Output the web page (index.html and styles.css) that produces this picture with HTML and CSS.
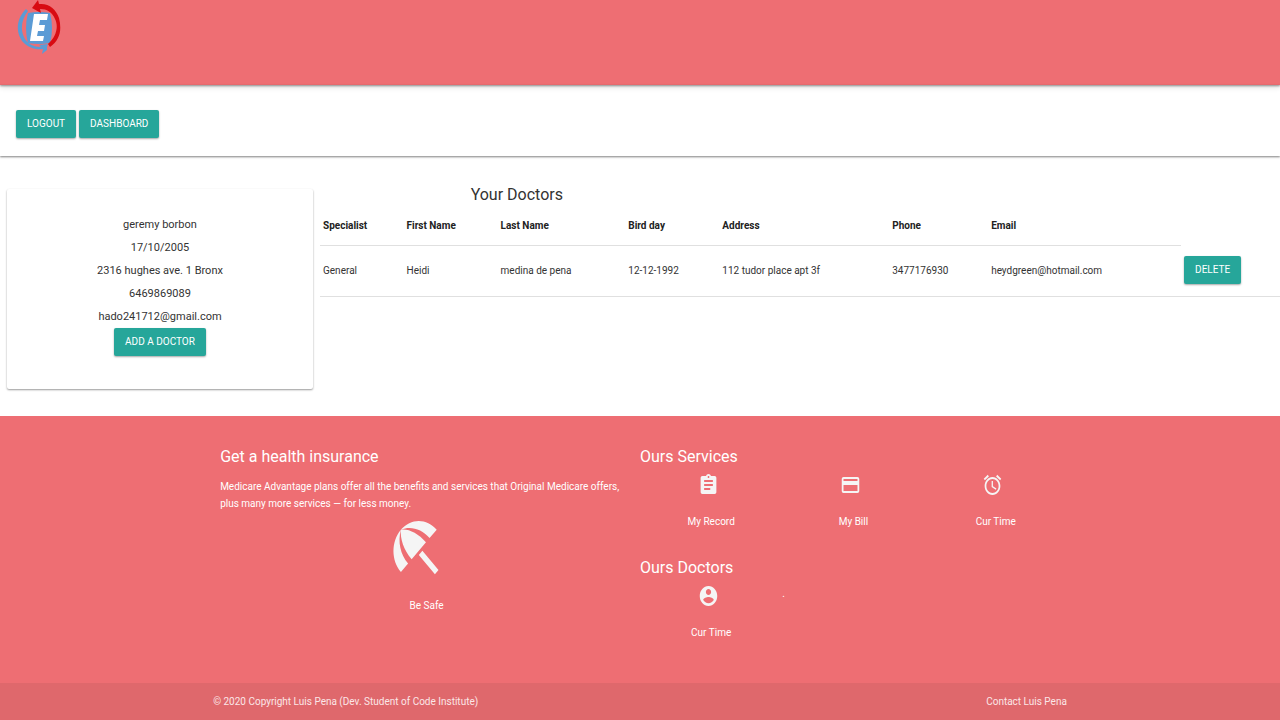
FILE: index.html
```html
<!DOCTYPE html>
<html lang="en">
<head>
<meta charset="utf-8">
<meta name="viewport" content="width=device-width, initial-scale=1">
<title>Your Doctors</title>
<link rel="stylesheet" href="styles.css">
</head>
<body>
<header class="brand-bar">
  <a class="logo" href="#" aria-label="Home">
    <svg viewBox="0 0 44 54" aria-hidden="true">
      <path d="M11 13Q22 11 33 13 37 28 33 43 22 45 11 43 7 28 11 13Z" fill="#5b9bd5"/>
      <path d="M9 9C0 18-2 31 5 41c6 7 14 9 21 8l-1 5 5-4c0-3 0-4 1-6l-9 1 2 2C17 47 11 44 8 39 3 31 4 20 11 11Z" fill="#5b9bd5"/>
      <path d="M15 8 21 0l1 4c10-1 17 5 20 14 3 12 1 22-9 29l-2-3c8-7 11-17 7-25-3-7-8-10-15-10l1 4Z" fill="#d80b12"/>
      <path d="M17 14h14l-1 6h-7l-1 5h6l-1 6h-6l-1 5h7l-1 5H13Z" fill="#fff"/>
    </svg>
  </a>
</header>
<nav class="actions">
  <button class="btn" type="button">LOGOUT</button>
  <button class="btn" type="button">DASHBOARD</button>
</nav>
<main class="dashboard">
  <section class="profile">
    <p>geremy borbon</p>
    <p>17/10/2005</p>
    <p>2316 hughes ave. 1 Bronx</p>
    <p>6469869089</p>
    <p>hado241712@gmail.com</p>
    <button class="btn" type="button">ADD A DOCTOR</button>
  </section>
  <section class="doctors">
    <h1>Your Doctors</h1>
    <table>
      <colgroup>
        <col class="c-specialist"><col class="c-first"><col class="c-last"><col class="c-birth"><col class="c-address"><col class="c-phone"><col class="c-email"><col>
      </colgroup>
      <thead>
        <tr><th>Specialist</th><th>First Name</th><th>Last Name</th><th>Bird day</th><th>Address</th><th>Phone</th><th>Email</th></tr>
      </thead>
      <tbody>
        <tr><td>General</td><td>Heidi</td><td>medina de pena</td><td>12-12-1992</td><td>112 tudor place apt 3f</td><td>3477176930</td><td>heydgreen@hotmail.com</td><td><button class="btn" type="button">DELETE</button></td></tr>
      </tbody>
    </table>
  </section>
</main>
<footer class="footer">
  <div class="container footer-grid">
    <section class="insurance">
      <h2>Get a health insurance</h2>
      <p>Medicare Advantage plans offer all the benefits and services that Original Medicare offers, plus many more services — for less money.</p>
      <a class="tile tile-large" href="#">
        <svg viewBox="0 0 24 24" preserveAspectRatio="none" aria-hidden="true"><path d="M13.127 14.56l1.43-1.43 6.44 6.443L19.57 21zm4.293-5.73l2.86-2.86c-3.95-3.95-10.35-3.96-14.3-.02 3.93-1.3 8.31-.25 11.44 2.88zM5.95 5.98c-3.94 3.95-3.93 10.35.02 14.3l2.86-2.86C5.7 14.29 4.65 9.91 5.95 5.98zm.02-.02l-.01.01c-.38 3.01 1.17 6.88 4.3 10.02l5.73-5.73c-3.13-3.13-7.01-4.68-10.02-4.3z"/></svg>
        <span>Be Safe</span>
      </a>
    </section>
    <div class="links">
      <section>
        <h2>Ours Services</h2>
        <div class="tiles">
          <a class="tile" href="#">
            <svg viewBox="0 0 24 24" preserveAspectRatio="none" aria-hidden="true"><path d="M19 3h-4.180C14.400 1.840 13.300 1 12 1c-1.300 0-2.400.840-2.820 2H5c-1.100 0-2 .9-2 2v14c0 1.100.9 2 2 2h14c1.100 0 2-.9 2-2V5c0-1.100-.9-2-2-2zm-7 0c.55 0 1 .45 1 1s-.45 1-1 1-1-.45-1-1 .45-1 1-1zm2 14H7v-2h7v2zm3-4H7v-2h10v2zm0-4H7V7h10v2z"/></svg>
            <span>My Record</span>
          </a>
          <a class="tile" href="#">
            <svg viewBox="0 0 24 24" preserveAspectRatio="none" aria-hidden="true"><path d="M20 4H4c-1.110 0-1.990.890-1.990 2L2 18c0 1.110.890 2 2 2h16c1.110 0 2-.890 2-2V6c0-1.110-.890-2-2-2zm0 14H4v-6h16v6zm0-10H4V6h16v2z"/></svg>
            <span>My Bill</span>
          </a>
          <a class="tile" href="#">
            <svg viewBox="0 0 24 24" preserveAspectRatio="none" aria-hidden="true"><path d="M22 5.720l-4.600-3.860-1.290 1.530 4.600 3.860L22 5.720zM7.880 3.390L6.600 1.860 2 5.710l1.290 1.530 4.590-3.850zM12.500 8H11v6l4.750 2.850.75-1.230-4-2.370V8zM12 4c-4.970 0-9 4.030-9 9s4.020 9 9 9c4.970 0 9-4.030 9-9s-4.030-9-9-9zm0 16c-3.870 0-7-3.130-7-7s3.130-7 7-7 7 3.130 7 7-3.130 7-7 7z"/></svg>
            <span>Cur Time</span>
          </a>
        </div>
      </section>
      <section>
        <h2>Ours Doctors</h2>
        <div class="tiles">
          <a class="tile" href="#">
            <svg viewBox="0 0 24 24" preserveAspectRatio="none" aria-hidden="true"><path d="M12 2C6.480 2 2 6.480 2 12s4.480 10 10 10 10-4.480 10-10S17.520 2 12 2zm0 3c1.660 0 3 1.340 3 3s-1.340 3-3 3-3-1.340-3-3 1.340-3 3-3zm0 14.200c-2.500 0-4.710-1.280-6-3.220.03-1.990 4-3.080 6-3.080 1.990 0 5.970 1.090 6 3.080-1.290 1.940-3.500 3.220-6 3.220z"/></svg>
            <span>Cur Time</span>
          </a>
          <span class="dot">.</span>
        </div>
      </section>
    </div>
  </div>
  <div class="copyright">
    <div class="container copyright-row">
      <span>© 2020 Copyright Luis Pena (Dev. Student of Code Institute)</span>
      <a href="#">Contact Luis Pena</a>
    </div>
  </div>
</footer>
</body>
</html>
```
FILE: styles.css
```css
* { box-sizing: border-box; }
body {
  margin: 0;
  min-height: 100vh;
  display: flex;
  flex-direction: column;
  background: #fff;
  color: #333;
  font: 10px/17px Roboto, "Open Sans", sans-serif;
}
h1, h2, p { margin: 0; font-weight: 400; }
a { color: inherit; text-decoration: none; }

.brand-bar {
  height: 85px;
  padding-left: 17px;
  background: #ee6e73;
  box-shadow: 0 1px 2px rgba(0, 0, 0, .4), 0 3px 5px rgba(0, 0, 0, .1);
}
.logo { display: block; width: 44px; }
.logo svg { display: block; width: 44px; height: 54px; }

.actions {
  display: flex;
  gap: 3px;
  padding: 25px 16px 18px;
  box-shadow: 0 1px 2px rgba(0, 0, 0, .5);
}
.btn {
  height: 28px;
  padding: 0 11px;
  border: 0;
  border-radius: 2px;
  background: #26a69a;
  color: #fff;
  font: inherit;
  font-size: 10px;
  line-height: 28px;
  white-space: nowrap;
  box-shadow: 0 1px 2px rgba(0, 0, 0, .35);
  cursor: pointer;
}

.dashboard {
  display: grid;
  grid-template-columns: 1fr 3fr;
  align-items: start;
  padding: 33px 0 27px;
}
.profile {
  margin: 0 7px;
  padding: 24px 16px 33px;
  border-radius: 2px;
  text-align: center;
  font-size: 11px;
  line-height: 23px;
  box-shadow: 0 1px 2px rgba(0, 0, 0, .4);
}
.profile .btn { display: block; margin: 0 auto; }

.doctors h1 {
  width: 41%;
  margin-top: -6px;
  text-align: center;
  font-size: 16px;
  line-height: 24px;
}
table {
  width: 100%;
  table-layout: fixed;
  border-collapse: collapse;
}
.c-specialist { width: 8.7%; }
.c-first { width: 9.8%; }
.c-last { width: 13.3%; }
.c-birth { width: 9.8%; }
.c-address { width: 17.7%; }
.c-phone { width: 10.3%; }
.c-email { width: 20.1%; }
th, td {
  padding: 0 3px;
  text-align: left;
  white-space: nowrap;
  border-bottom: 1px solid #e0e0e0;
}
th { height: 38px; font-weight: 700; color: #222; }
td { height: 51px; }

.footer {
  flex: 1;
  display: flex;
  flex-direction: column;
  background: #ee6e73;
  color: #fff;
}
.container { width: 66.7%; margin: 0 auto; }
.footer-grid {
  flex: 1;
  display: grid;
  grid-template-columns: 1fr 1fr;
  padding-top: 29px;
}
.footer h2 { font-size: 16px; line-height: 24px; }
.insurance { padding: 0 7px; }
.insurance p { margin-top: 9px; }
.links { display: grid; align-content: start; gap: 26px; }
.tiles { display: grid; grid-template-columns: repeat(3, 1fr); }
.tile {
  display: flex;
  flex-direction: column;
  align-items: center;
  gap: 16px;
}
.tile svg {
  width: 21px;
  height: 24px;
  margin: 4px 6px 0 0;
  fill: #f5f5f5;
}
.tile-large { gap: 14px; }
.tile-large svg { width: 60px; height: 71px; margin: 0 22px 0 0; }
.dot { line-height: 28px; }
.copyright { background: #df686c; color: #fbe6e7; }
.copyright-row {
  display: flex;
  justify-content: space-between;
  line-height: 37px;
}
```
